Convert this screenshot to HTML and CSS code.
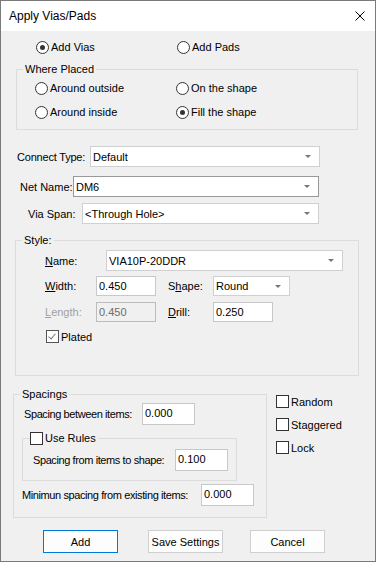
FILE: index.html
```html
<!DOCTYPE html>
<html lang="en">
<head>
    <meta charset="UTF-8">
    <meta name="viewport" content="width=device-width, initial-scale=1.0">
    <title>Apply Vias/Pads</title>

    <link rel="stylesheet" href="styles.css">
</head>
<body>
    <div class="window">
        <div class="titlebar">
            <span class="title">Apply Vias/Pads</span>
            <svg class="close" width="10" height="10" viewBox="0 0 10 10">
                <path d="M0.5 0.5L9.5 9.5M9.5 0.5L0.5 9.5" stroke="#000" stroke-width="1" fill="none"/>
            </svg>
        </div>

        <div class="dialog">
            <div class="radio-row top-radios">
                <label class="radio checked"><span class="circle"></span>Add Vias</label>
                <label class="radio"><span class="circle"></span>Add Pads</label>
            </div>

            <fieldset class="group where">
                <legend>Where Placed</legend>
                <div class="group-body">
                    <div class="radio-row">
                        <label class="radio"><span class="circle"></span>Around outside</label>
                        <label class="radio"><span class="circle"></span>On the shape</label>
                    </div>
                    <div class="radio-row">
                        <label class="radio"><span class="circle"></span>Around inside</label>
                        <label class="radio checked"><span class="circle"></span>Fill the shape</label>
                    </div>
                </div>
            </fieldset>

            <div class="field-row connect">
                <span class="lbl">Connect Type:</span>
                <div class="combo"><span>Default</span><i class="arrow"></i></div>
            </div>
            <div class="field-row net">
                <span class="lbl">Net Name:</span>
                <div class="combo focus"><span>DM6</span><i class="arrow"></i></div>
            </div>
            <div class="field-row via">
                <span class="lbl">Via Span:</span>
                <div class="combo"><span>&lt;Through Hole&gt;</span><i class="arrow"></i></div>
            </div>

            <fieldset class="group style">
                <legend>Style:</legend>
                <div class="group-body">
                    <div class="style-row name-row">
                        <span class="lbl"><u>N</u>ame:</span>
                        <div class="combo"><span>VIA10P-20DDR</span><i class="arrow"></i></div>
                    </div>
                    <div class="style-row">
                        <span class="lbl w"><u>W</u>idth:</span>
                        <div class="input">0.450</div>
                        <span class="lbl s">S<u>h</u>ape:</span>
                        <div class="combo small"><span>Round</span><i class="arrow"></i></div>
                    </div>
                    <div class="style-row length-row">
                        <span class="lbl w disabled"><u>L</u>ength:</span>
                        <div class="input disabled">0.450</div>
                        <span class="lbl s"><u>D</u>rill:</span>
                        <div class="input">0.250</div>
                    </div>
                    <label class="check plated"><span class="box checked"></span>Plated</label>
                </div>
            </fieldset>

            <div class="lower">
                <fieldset class="group spacings">
                    <legend>Spacings</legend>
                    <div class="sp-row between">
                        <span class="lbl">Spacing between items:</span>
                        <div class="input tall">0.000</div>
                    </div>
                    <fieldset class="group rules">
                        <legend><span class="box"></span>Use Rules</legend>
                        <div class="sp-row shape">
                            <span class="lbl">Spacing from items to shape:</span>
                            <div class="input tall">0.100</div>
                        </div>
                    </fieldset>
                    <div class="sp-row existing">
                        <span class="lbl">Minimun spacing from existing items:</span>
                        <div class="input tall">0.000</div>
                    </div>
                </fieldset>

                <div class="options">
                    <label class="check"><span class="box"></span>Random</label>
                    <label class="check"><span class="box"></span>Staggered</label>
                    <label class="check"><span class="box"></span>Lock</label>
                </div>
            </div>

            <div class="buttons">
                <button class="btn default">Add</button>
                <button class="btn save">Save Settings</button>
                <button class="btn cancel">Cancel</button>
            </div>
        </div>
    </div>
</body>
</html>
```

FILE: styles.css
```css
* {
    box-sizing: border-box;
}
body {
    margin: 0;
    background: #fff;
    font-family: "Liberation Sans", Arial, sans-serif;
    font-size: 11px;
    line-height: 14px;
    color: #000;
}
.window {
    width: 376px;
    height: 562px;
    border: 1px solid #7a7a7a;
    display: flex;
    flex-direction: column;
}
.titlebar {
    height: 30px;
    background: #fff;
    display: flex;
    align-items: center;
    justify-content: space-between;
    padding: 0 10px 0 8px;
}
.title {
    font-size: 12px;
}
.dialog {
    flex: 1;
    background: #f0f0f0;
    overflow: hidden;
}

/* radios */
.radio-row {
    display: flex;
    height: 24px;
}
.top-radios {
    margin-top: 4px;
    padding-left: 35px;
}
.radio {
    display: flex;
    align-items: center;
    gap: 2px;
    width: 141px;
    white-space: nowrap;
}
.circle {
    width: 13px;
    height: 13px;
    border: 1px solid #333;
    border-radius: 50%;
    background: #fff;
    display: flex;
    align-items: center;
    justify-content: center;
}
.radio.checked .circle:after {
    content: '';
    width: 5px;
    height: 5px;
    border-radius: 50%;
    background: #333;
}

/* group boxes */
.group {
    margin: 0;
    padding: 0;
    border: 1px solid #dcdcdc;
    min-width: 0;
}
.group legend {
    margin-left: 6px;
    padding: 0 2px;
    height: 14px;
    line-height: 14px;
}
.where {
    margin: 3px 0 0 15px;
    width: 342px;
}
.where .group-body {
    padding: 0 0 5px 18px;
}

/* combos and text boxes */
.combo {
    height: 21px;
    background: #fff;
    border: 1px solid #d0d0d0;
    display: flex;
    align-items: center;
    justify-content: space-between;
    padding: 0 8px 0 2px;
}
.combo.focus {
    border-color: #999;
}
.arrow {
    width: 0;
    height: 0;
    border-left: 3px solid transparent;
    border-right: 3px solid transparent;
    border-top: 3px solid #777;
}
.input {
    height: 20px;
    background: #fff;
    border: 1px solid #c8c8c8;
    padding: 0 2px;
    display: flex;
    align-items: center;
}
.input.tall {
    height: 22px;
    width: 53px;
    align-items: flex-start;
    padding-top: 2px;
}
.input.disabled {
    background: #f0f0f0;
    border-color: #bcbcbc;
    color: #6d6d6d;
}
.lbl {
    flex: none;
    white-space: nowrap;
}
.disabled {
    color: #a0a0a0;
}

.field-row {
    display: flex;
    align-items: center;
}
.connect {
    margin: 16px 0 0 16px;
}
.connect .lbl {
    width: 73px;
    letter-spacing: -0.2px;
}
.connect .combo {
    width: 230px;
}
.net {
    margin: 9px 0 0 19px;
}
.net .lbl {
    width: 53px;
}
.net .combo {
    width: 246px;
}
.via {
    margin: 6px 0 0 27px;
}
.via .lbl {
    width: 54px;
}
.via .combo {
    width: 237px;
}

/* style box */
.style {
    margin: 9px 0 0 14px;
    width: 344px;
}
.style .group-body {
    padding: 0 0 32px 29px;
}
.style-row {
    display: flex;
    align-items: center;
    margin-top: 5px;
}
.name-row {
    margin-top: 3px;
}
.name-row .lbl {
    width: 61px;
}
.name-row .combo {
    width: 237px;
}
.length-row {
    margin-top: 6px;
}
.style-row .lbl.w {
    width: 51px;
}
.style-row .input {
    width: 60px;
}
.style-row .lbl.s {
    width: 45px;
    margin-left: 12px;
}
.combo.small {
    width: 77px;
    height: 20px;
}

/* checkboxes */
.check {
    display: flex;
    align-items: center;
    gap: 2px;
    white-space: nowrap;
}
.box {
    width: 13px;
    height: 13px;
    border: 1px solid #333;
    background: #fff;
    flex: none;
    position: relative;
}
.box.checked {
    border-color: #555;
}
.box.checked:after {
    content: '';
    position: absolute;
    left: 3px;
    top: 1px;
    width: 3px;
    height: 6px;
    border-right: 1px solid #777;
    border-bottom: 1px solid #777;
    transform: rotate(40deg);
}
.plated {
    margin: 8px 0 0 1px;
    height: 13px;
}

/* spacings */
.lower {
    display: flex;
    margin: 11px 0 0 12px;
}
.spacings {
    width: 254px;
    padding: 0 0 11px 0;
}
.sp-row {
    display: flex;
    align-items: center;
}
.sp-row .lbl {
    letter-spacing: -0.4px;
}
.between {
    margin-top: 2px;
    padding-left: 10px;
}
.between .lbl {
    width: 118px;
}
.rules {
    margin: 6px 0 0 8px;
    width: 215px;
    padding: 0 0 9px 0;
}
.rules legend {
    display: flex;
    align-items: center;
    gap: 2px;
    margin-left: 7px;
    padding: 0 2px 0 0;
}
.shape {
    margin-top: 4px;
    padding-left: 10px;
}
.shape .lbl {
    width: 142px;
}
.existing {
    margin-top: 3px;
    padding-left: 8px;
}
.existing .lbl {
    width: 179px;
}
.options {
    margin-left: 9px;
    padding-top: 3px;
}
.options .check {
    height: 23px;
}

/* buttons */
.buttons {
    display: flex;
    margin: 12px 0 0 42px;
}
.btn {
    width: 75px;
    height: 23px;
    padding: 0;
    background: #fdfdfd;
    border: 1px solid #cfcfcf;
    font-family: inherit;
    font-size: 11px;
    color: #000;
}
.btn.default {
    border-color: #0078d7;
}
.btn.save {
    margin-left: 30px;
}
.btn.cancel {
    margin-left: 27px;
}
```
